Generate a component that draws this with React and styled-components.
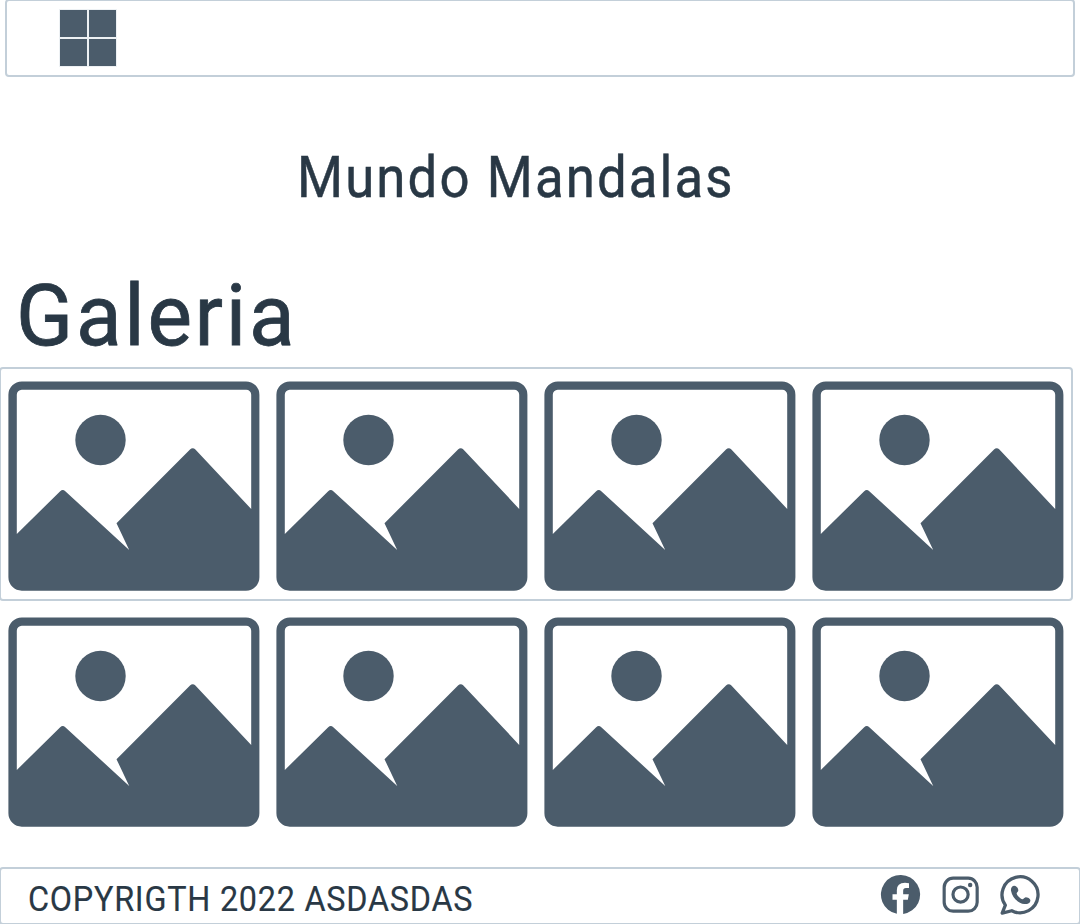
import React from "react";
import styled, { createGlobalStyle } from "styled-components";

const ink = "#293845";
const slate = "#4b5c6b";
const line = "#c3cfd9";

const GlobalStyle = createGlobalStyle`
  * { box-sizing: border-box; }
  body { margin: 0; background: #fff; overflow: hidden; }
`;

const Page = styled.div`
  width: 1080px;
  height: 924px;
  overflow: hidden;
  display: flex;
  flex-direction: column;
  color: ${ink};
  font-family: Roboto, "Liberation Sans", sans-serif;
`;

const Header = styled.header`
  flex: none;
  height: 78px;
  width: 1070px;
  margin: -1px 0 0 5px;
  padding-left: 52px;
  display: flex;
  align-items: center;
  border: 2px solid ${line};
  border-radius: 4px;
`;

const Logo = styled.div`
  width: 58px;
  height: 58px;
  display: grid;
  grid-template-columns: 27px 27px;
  grid-template-rows: 27px 27px;
  gap: 2px;
  padding: 1px;
  background: #edf1f4;
`;

const Tile = styled.span`
  background: ${slate};
`;

const Label = styled.span`
  display: block;
  font-size: ${(p) => p.$size}px;
  line-height: 1;
  letter-spacing: ${(p) => p.$spacing}px;
  font-weight: 400;
  white-space: nowrap;
  -webkit-text-stroke: ${(p) => p.$weight || 0}px ${ink};
  transform: scaleX(${(p) => p.$stretch || 1});
  transform-origin: left;
`;

const Title = styled.h1`
  flex: none;
  margin: 0;
  height: 157px;
  padding: 72px 0 0 297px;
`;

const SectionTitle = styled.h2`
  flex: none;
  margin: 0;
  height: 133px;
  padding: 40px 0 0 16px;
`;

const Row = styled.section`
  flex: none;
  display: flex;
  width: 1074px;
  height: ${(p) => (p.$outlined ? 234 : 236)}px;
  margin-left: -1px;
  padding-left: ${(p) => (p.$outlined ? 0 : 1)}px;
  ${(p) => p.$outlined && `
    border: 2px solid ${line};
    border-radius: 4px;
    margin-bottom: 3px;
  `}
`;

const Cell = styled.figure`
  flex: none;
  width: 268px;
  height: 236px;
  margin: ${(p) => (p.$outlined ? "-1px 0 0 -1px" : "0")};
  & + & { margin-left: 0; }
  svg { display: block; }
`;

const Footer = styled.footer`
  flex: none;
  width: 1082px;
  height: 58px;
  margin: 27px 0 0 -1px;
  padding: 2px 33px 0 27px;
  display: flex;
  align-items: center;
  justify-content: space-between;
  border: 2px solid ${line};
  border-radius: 4px;
`;

const Copyright = styled.div`
  padding-top: 4px;
`;

const Socials = styled.nav`
  display: flex;
  gap: 10px;
  margin-top: -4px;
  color: ${slate};
`;

const SocialIcon = styled.svg.attrs({ viewBox: "0 0 150 150" })`
  display: block;
  width: 50px;
  height: 50px;
`;

const Facebook = () => (
  <SocialIcon fill="currentColor">
    <path d="M62.5 131.3A58.8 58.8 0 1 1 81.5 131.8V89H95.5L98.5 73H81.5V62Q81.5 54 90 54H99V39.5Q94 38.5 87 38.5Q62.5 38.5 62.5 61V73H49.5V89H62.5Z" />
  </SocialIcon>
);

const Instagram = () => (
  <SocialIcon fill="none" stroke="currentColor">
    <rect x="24.5" y="24.5" width="99" height="99" rx="27" strokeWidth="9.5" />
    <circle cx="73.7" cy="73.7" r="22.8" strokeWidth="9.5" />
    <circle cx="102.5" cy="45" r="6.7" fill="currentColor" stroke="none" />
  </SocialIcon>
);

const Whatsapp = () => (
  <SocialIcon fill="currentColor">
    <path
      transform="translate(2.5 0)"
      d="M25.6 105.5A54 54 0 1 1 44.8 122.2L16 129.5Z"
      fill="none"
      stroke="currentColor"
      strokeWidth="9.8"
      strokeLinejoin="round"
    />
    <path
      transform="translate(1 0)"
      d="M54 47C47 47 43 54 44 62C48 84 66 100 84 102C94 103 103 98 102 90C101 86 94 82 88 82C84 83 82 88 78 88C72 86 63 77 61 71C61 67 66 65 66 61C66 55 60 47 54 47Z"
    />
  </SocialIcon>
);

const Picture = () => (
  <svg width="268" height="236" viewBox="0 0 268 236" fill={slate}>
    <path
      fillRule="evenodd"
      d="M22 13.4H246a13.4 13.4 0 0 1 13.4 13.4V209.3a13.4 13.4 0 0 1-13.4 13.4H22A13.4 13.4 0 0 1 8.4 209.3V26.8A13.4 13.4 0 0 1 22 13.4Z
      M21.7 21.7A5 5 0 0 0 16.8 26.7V166L60.2 123.2Q62.7 120.8 65.3 123.2L129.2 182L116.5 155.2L190 81.6Q192.7 79 195.4 81.6L251.2 140.9V26.7A5 5 0 0 0 246.2 21.7Z"
    />
    <circle cx="100.5" cy="72" r="25.2" />
  </svg>
);

const GalleryRow = ({ outlined }) => (
  <Row $outlined={outlined}>
    {[0, 1, 2, 3].map((i) => (
      <Cell key={i} $outlined={outlined}><Picture /></Cell>
    ))}
  </Row>
);

export default function App() {
  return (
    <>
      <GlobalStyle />
      <Page>
        <Header>
          <Logo><Tile /><Tile /><Tile /><Tile /></Logo>
        </Header>
        <Title><Label $size={57.5} $spacing={2.3} $stretch={0.917} $weight={0.5}>Mundo Mandalas</Label></Title>
        <SectionTitle><Label $size={85.5} $spacing={2.8} $stretch={0.981} $weight={0.8}>Galeria</Label></SectionTitle>
        <GalleryRow outlined />
        <GalleryRow />
        <Footer>
          <Copyright><Label $size={34.5} $spacing={0.8} $stretch={0.938} $weight={0.15}>COPYRIGTH 2022 ASDASDAS</Label></Copyright>
          <Socials>
            <Facebook />
            <Instagram />
            <Whatsapp />
          </Socials>
        </Footer>
      </Page>
    </>
  );
}
